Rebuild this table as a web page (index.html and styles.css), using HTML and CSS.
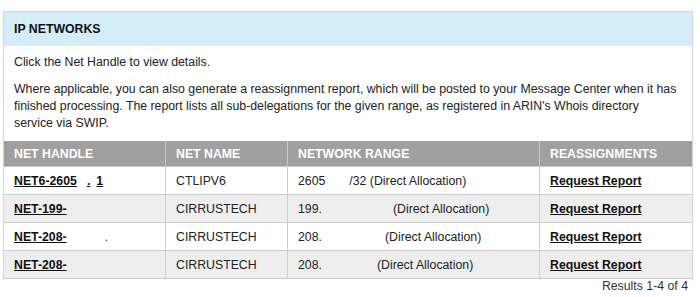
FILE: index.html
```html
<!DOCTYPE html>
<html>
<head>
<meta charset="utf-8">
<link rel="stylesheet" href="styles.css">
</head>
<body>
<div class="panel">
  <div class="panel-head">IP NETWORKS</div>
  <div class="panel-body">
    <p class="p1">Click the Net Handle to view details.</p>
    <p class="p2">Where applicable, you can also generate a reassignment report, which will be posted to your Message Center when it has finished processing. The report lists all sub-delegations for the given range, as registered in ARIN's Whois directory service via SWIP.</p>
  </div>
  <table class="nets">
    <thead>
      <tr><th class="c1">NET HANDLE</th><th class="c2">NET NAME</th><th class="c3">NETWORK RANGE</th><th class="c4">REASSIGNMENTS</th></tr>
    </thead>
    <tbody>
      <tr><td><a class="lnk" href="#">NET6-2605<span class="gap" style="width:10px"></span>.<span class="gap" style="width:6px"></span>1</a></td><td>CTLIPV6</td><td>2605<span class="gap" style="width:24px"></span>/32 (Direct Allocation)</td><td><a class="lnk" href="#">Request Report</a></td></tr>
      <tr><td><a class="lnk" href="#">NET-199-<span class="gap" style="width:52px"></span></a></td><td>CIRRUSTECH</td><td>199.<span class="gap" style="width:71px"></span>(Direct Allocation)</td><td><a class="lnk" href="#">Request Report</a></td></tr>
      <tr><td><a class="lnk" href="#">NET-208-<span class="gap" style="width:24px"></span></a><span class="gap" style="width:14px"></span>.</td><td>CIRRUSTECH</td><td>208.<span class="gap" style="width:63px"></span>(Direct Allocation)</td><td><a class="lnk" href="#">Request Report</a></td></tr>
      <tr><td><a class="lnk" href="#">NET-208-<span class="gap" style="width:30px"></span></a></td><td>CIRRUSTECH</td><td>208.<span class="gap" style="width:55px"></span>(Direct Allocation)</td><td><a class="lnk" href="#">Request Report</a></td></tr>
    </tbody>
  </table>
</div>
<div class="results">Results 1-4 of 4</div>
</body>
</html>
```
FILE: styles.css
```css
html, body {
  margin: 0;
  padding: 0;
  background: #fff;
}
body {
  padding: 11px 7px 0 3px;
  font-family: "Liberation Sans", Arial, sans-serif;
  font-size: 12.3px;
  color: #222;
}
.panel {
  border: 1px solid #d4d4d4;
  border-bottom: none;
}
.panel-head {
  background: #d5ecf9;
  height: 34px;
  line-height: 34px;
  padding-left: 10px;
  font-weight: bold;
  color: #111;
}
.panel-body {
  padding: 8px 12px 9px 10px;
}
.panel-body p {
  margin: 0;
  line-height: 17px;
}
.p1 {
  margin-bottom: 10px !important;
}
.nets {
  width: 100%;
  border-collapse: collapse;
  table-layout: fixed;
}
.nets th {
  background: #a0a0a0;
  color: #fff;
  font-weight: bold;
  text-align: left;
  height: 25px;
  padding: 0 10px;
  border-left: 1px solid #c8c8c8;
  border-bottom: 1px solid #c8c8c8;
}
.nets th:first-child, .nets td:first-child {
  border-left: none;
}
.c1 { width: 141px; }
.c2 { width: 101px; }
.c3 { width: 231px; }
.nets td {
  height: 27px;
  padding: 0 10px;
  border-left: 1px solid #cdcdcd;
  border-bottom: 1px solid #cdcdcd;
  white-space: nowrap;
  overflow: hidden;
}
.nets tbody tr:nth-child(even) td {
  background: #eeeeee;
}
.lnk {
  color: #111;
  font-weight: bold;
  text-decoration: underline;
}
.gap {
  display: inline-block;
}
.results {
  text-align: right;
  padding-right: 5px;
  margin-top: 0;
  line-height: 14px;
  color: #333;
}
```
